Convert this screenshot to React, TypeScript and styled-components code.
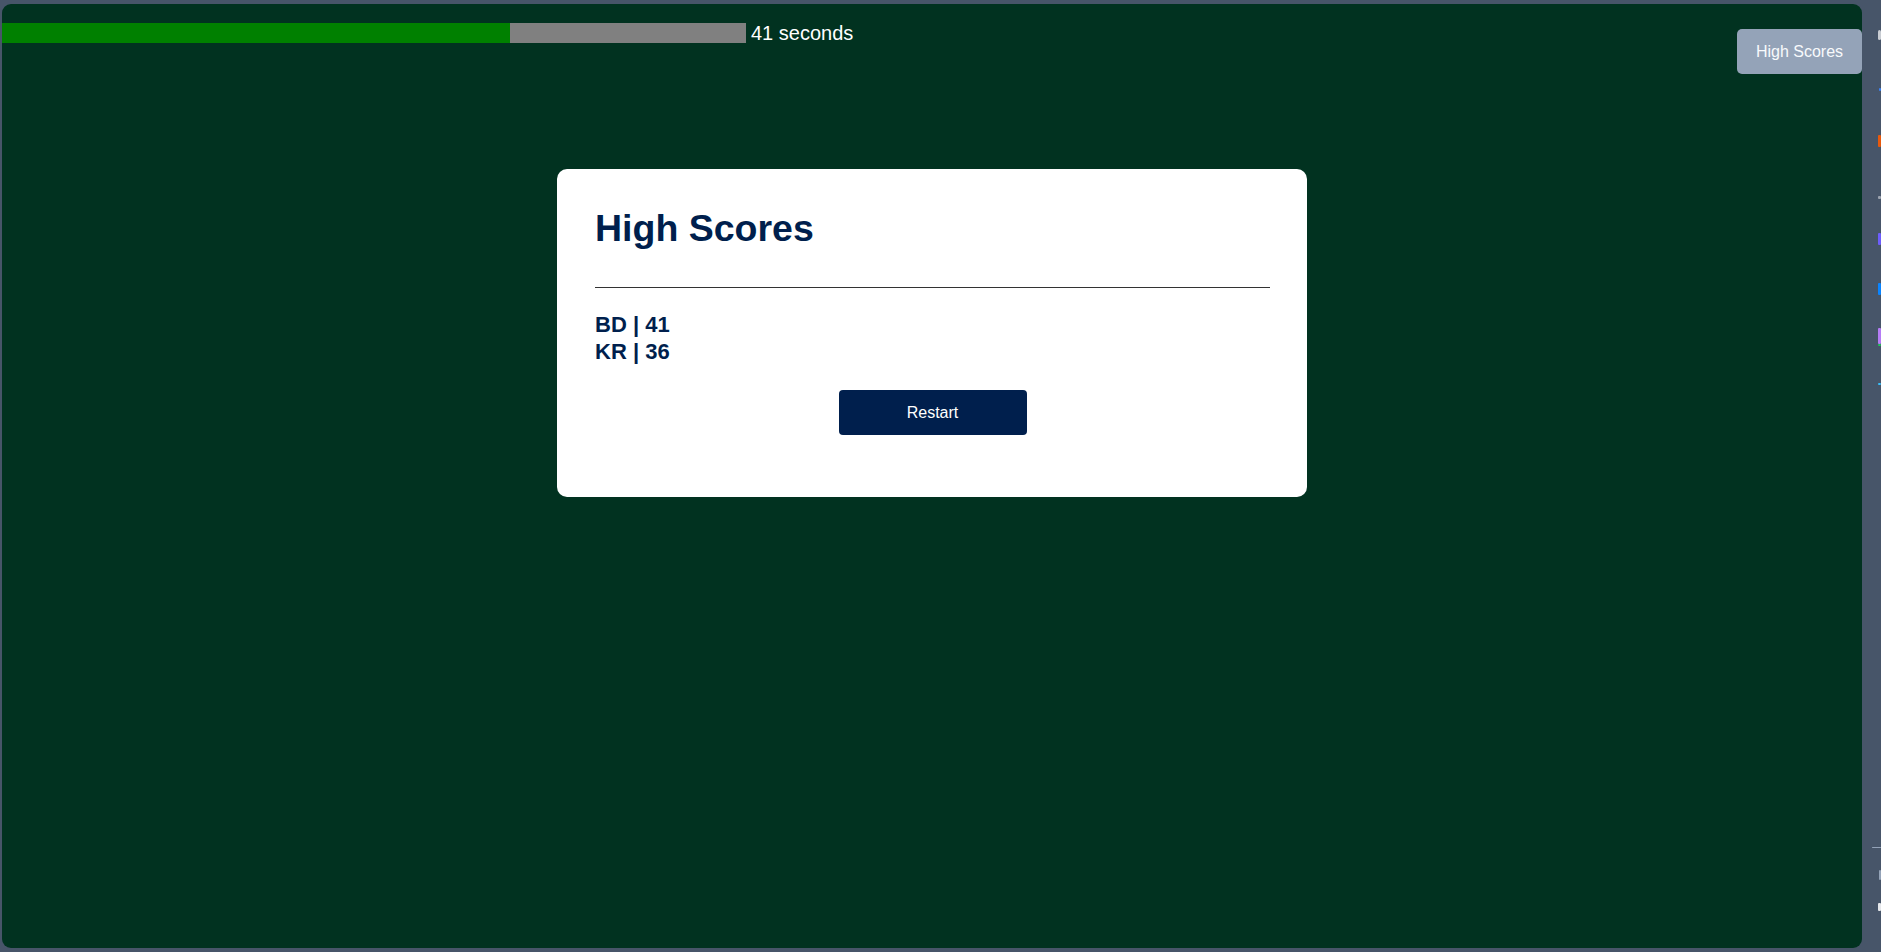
import React from "react";
import styled, { createGlobalStyle } from "styled-components";

const Global = createGlobalStyle`
  html, body { margin: 0; padding: 0; background: #475569; }
  body { font-family: "Liberation Sans", Arial, sans-serif; }
  * { box-sizing: border-box; }
`;

const Screen = styled.div`
  display: flex;
  width: 1881px;
  height: 952px;
  padding: 4px 0 4px 2px;
  background: #475569;
`;

const Panel = styled.main`
  flex: 0 0 1860px;
  height: 944px;
  background: #013220;
  border-radius: 9px;
  display: flex;
  flex-direction: column;
  align-items: center;
`;

const TopRow = styled.header`
  align-self: stretch;
  display: flex;
  align-items: flex-start;
`;

const Timer = styled.div`
  display: flex;
  align-items: center;
  margin-top: 17.5px;
  width: 100%;
`;

const Track = styled.div`
  display: flex;
  width: 744px;
  height: 20px;
  background: #808080;
`;

const Fill = styled.div`
  height: 100%;
  background: #008000;
`;

const TimerLabel = styled.span`
  margin-left: 5px;
  color: #ffffff;
  font-size: 20px;
  line-height: 23px;
  white-space: nowrap;
`;

const ScoresButton = styled.button`
  flex: 0 0 125px;
  margin-top: 25px;
  height: 45px;
  border: none;
  border-radius: 5px;
  background: #94a3b8;
  color: #f8fafc;
  font-family: "Liberation Sans", Arial, sans-serif;
  font-size: 16px;
  padding: 0;
  cursor: pointer;
`;

const Modal = styled.section`
  margin-top: 95px;
  width: 750px;
  background: #ffffff;
  border-radius: 10px;
  padding: 38px 37px 38px 38px;
  display: flex;
  flex-direction: column;
  color: #001f4d;
`;

const Title = styled.h1`
  margin: 0;
  font-size: 37.5px;
  line-height: 42px;
  font-weight: 700;
`;

const Divider = styled.hr`
  margin: 38px 0 0;
  border: none;
  border-top: 1px solid #333333;
  height: 0;
`;

const ScoreList = styled.ul`
  list-style: none;
  margin: 24px 0 0;
  padding: 0;
`;

const ScoreItem = styled.li`
  font-size: 22px;
  line-height: 26.5px;
  font-weight: 700;
`;

const RestartButton = styled.button`
  align-self: center;
  margin: 25px 0 24px;
  width: 188px;
  height: 45px;
  border: none;
  border-radius: 4px;
  background: #001f4d;
  color: #ffffff;
  font-family: "Liberation Sans", Arial, sans-serif;
  font-size: 16px;
  cursor: pointer;
`;

const Strip = styled.aside`
  flex: 1;
  display: flex;
  flex-direction: column;
  align-items: flex-end;
  overflow: hidden;
`;

const Mark = styled.span<{ $top: number; $w: number; $h: number; $c: string; $r?: number }>`
  display: block;
  flex: none;
  margin-top: ${(p) => p.$top}px;
  width: ${(p) => p.$w}px;
  height: ${(p) => p.$h}px;
  background: ${(p) => p.$c};
  border-radius: ${(p) => p.$r ?? 1}px;
`;

const scores = [
  { name: "BD", score: 41 },
  { name: "KR", score: 36 },
];

export default function App() {
  const seconds = 41;
  const pct = (seconds / 60) * 100;
  return (
    <>
      <Global />
      <Screen>
        <Panel>
          <TopRow>
            <Timer>
              <Track>
                <Fill style={{ width: `${pct}%` }} />
              </Track>
              <TimerLabel>{seconds} seconds</TimerLabel>
            </Timer>
            <ScoresButton>High Scores</ScoresButton>
          </TopRow>
          <Modal>
            <Title>High Scores</Title>
            <Divider />
            <ScoreList>
              {scores.map((s) => (
                <ScoreItem key={s.name}>
                  {s.name} | {s.score}
                </ScoreItem>
              ))}
            </ScoreList>
            <RestartButton>Restart</RestartButton>
          </Modal>
        </Panel>
        <Strip>
          <Mark $top={26} $w={3} $h={10} $c="#c8ccd2" $r={2} />
          <Mark $top={48} $w={2} $h={3} $c="#3b82f6" />
          <Mark $top={44} $w={3} $h={12} $c="#e8590c" />
          <Mark $top={49} $w={3} $h={3} $c="#9ca3af" />
          <Mark $top={34} $w={3} $h={12} $c="#6d5dfc" />
          <Mark $top={38} $w={3} $h={12} $c="#0a84ff" />
          <Mark $top={33} $w={3} $h={16} $c="#b57cf5" />
          <Mark $top={0} $w={3} $h={2} $c="#22c55e" />
          <Mark $top={37} $w={3} $h={2} $c="#38bdf8" />
          <Mark $top={462} $w={9} $h={1} $c="#94a3b8" />
          <Mark $top={22} $w={2} $h={10} $c="#94a3b8" />
          <Mark $top={23} $w={3} $h={8} $c="#e5e7eb" />
        </Strip>
      </Screen>
    </>
  );
}
